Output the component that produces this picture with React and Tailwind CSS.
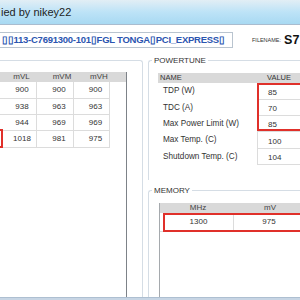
export default function App() {
  const font = { fontFamily: '"Liberation Sans", Arial, sans-serif' };
  const leftRows = [
    ["900", "900", "900", "h-[17px]"],
    ["938", "963", "963", "h-[16px]"],
    ["944", "969", "969", "h-[16px]"],
    ["1018", "981", "975", "h-[17px]"],
  ];
  const ptRows = [
    ["TDP (W)", "85", "h-[17px]"],
    ["TDC (A)", "70", "h-[16px]"],
    ["Max Power Limit (W)", "85", "h-[16px]"],
    ["Max Temp. (C)", "100", "h-[17px]"],
    ["Shutdown Temp. (C)", "104", "h-[16px]"],
  ];
  return (
    <div
      className="w-[300px] h-[300px] overflow-hidden bg-white relative flex flex-col text-[#1e1e1e]"
      style={font}
    >
      {/* title bar */}
      <div className="h-[25px] shrink-0 border-b border-[#a9bccf] bg-gradient-to-b from-[#e2eef5] via-[#bde3f7] to-[#a8d9f2] flex items-center pl-[1px] text-[11px] leading-none">
        ied by nikey22
      </div>
      {/* id row */}
      <div className="h-[35px] shrink-0 flex items-start pt-[7px]">
        <div className="w-[233px] shrink-0 h-[16px] border border-l-0 border-[#b9c4cf] flex items-center pl-[2px] text-[9.5px] tracking-[-0.25px] font-bold text-[#2b55b0] whitespace-nowrap overflow-hidden">
          ▯▯113-C7691300-101▯FGL TONGA▯PCI_EXPRESS▯
        </div>
        <div className="ml-[19px] h-[16px] flex items-center whitespace-nowrap">
          <span className="text-[5.5px] text-[#333]">FILENAME:</span>
          <span className="ml-[3px] text-[12.5px] font-bold text-[#111]">S7</span>
        </div>
      </div>
      {/* main */}
      <div className="flex flex-1 min-h-0">
        {/* left group */}
        <div className="w-[143px] shrink-0 border-t border-r border-[#d5dde5] rounded-tr-[3px] flex flex-col pt-[11px]">
          <div className="w-[127px] flex-1 border-r border-[#7d8288] flex flex-col">
            <div className="h-[10px] bg-[#d9d9d9] flex text-[8px] leading-none text-[#444] items-center">
              <div className="w-[43px] text-center">mVL</div>
              <div className="w-[38px] text-center">mVM</div>
              <div className="w-[36px] text-center">mVH</div>
            </div>
            {leftRows.map(([a, b, c, h], i) => (
              <div key={i} className={`flex ${h} text-[8px] text-[#333]`}>
                <div className="w-[37px] border-r border-b border-[#dcdcdc] flex items-center justify-center pl-[8px]">{a}</div>
                <div className="w-[37px] border-r border-b border-[#dcdcdc] flex items-center justify-center pl-[8px]">{b}</div>
                <div className="w-[36px] border-r border-b border-[#dcdcdc] flex items-center justify-center pl-[8px]">{c}</div>
              </div>
            ))}
          </div>
        </div>
        {/* right column */}
        <div className="flex-1 flex flex-col pl-[5px]">
          {/* powertune */}
          <div className="relative h-[120px] border-t border-l border-[#d5dde5] rounded-tl-[3px] pl-[9px] pt-[12px]">
            <div className="absolute left-[3px] top-[-7px] bg-white px-[2px] text-[8px] leading-[13px] text-[#333]">POWERTUNE</div>
            <div className="flex flex-col">
              <div className="h-[10px] bg-[#d9d9d9] flex items-center text-[7.5px] leading-none text-[#333]">
                <div className="w-[99px] pl-[2px]">NAME</div>
                <div className="flex-1 pl-[10px]">VALUE</div>
              </div>
              {ptRows.map(([n, v, h], i) => (
                <div key={i} className={`flex ${h} text-[8.2px] text-[#333]`}>
                  <div className="w-[99px] flex items-center pl-[5px] whitespace-nowrap">{n}</div>
                  <div className="flex-1 border-l border-b border-[#dcdcdc] flex items-center pl-[10px] pt-[3px] text-[8px]">{v}</div>
                </div>
              ))}
            </div>
          </div>
          <div className="h-[10px]" />
          {/* memory */}
          <div className="relative flex-1 border-t border-l border-[#d5dde5] rounded-tl-[3px] pl-[10px] pt-[12px] flex flex-col">
            <div className="absolute left-[3px] top-[-7px] bg-white px-[2px] text-[8px] leading-[13px] text-[#333]">MEMORY</div>
            <div className="flex-1 border-l border-[#a5a9ad] flex flex-col">
              <div className="h-[10px] bg-[#d9d9d9] flex items-center text-[8px] leading-none text-[#444]">
                <div className="w-[76px] text-center">MHz</div>
                <div className="w-[68px] text-center">mV</div>
              </div>
              <div className="flex h-[19px] text-[8px] text-[#333]">
                <div className="w-[74px] border-r border-b border-[#dcdcdc] flex items-center justify-center pl-[4px]">1300</div>
                <div className="w-[70px] border-b border-[#dcdcdc] flex items-center justify-center">975</div>
              </div>
            </div>
          </div>
        </div>
      </div>
      {/* bottom strip */}
      <div className="h-[3px] shrink-0 bg-[#c7d5e4] border-t border-[#aebfd1]" />
      {/* red annotation boxes */}
      <div className="absolute left-[-20px] top-[129px] w-[23px] h-[19px] border-2 border-[#e0302a]" />
      <div className="absolute left-[257px] top-[83px] w-[50px] h-[48px] border-2 border-[#e0302a]" />
      <div className="absolute left-[163px] top-[213px] w-[145px] h-[19px] border-2 border-[#e0302a]" />
    </div>
  );
}
